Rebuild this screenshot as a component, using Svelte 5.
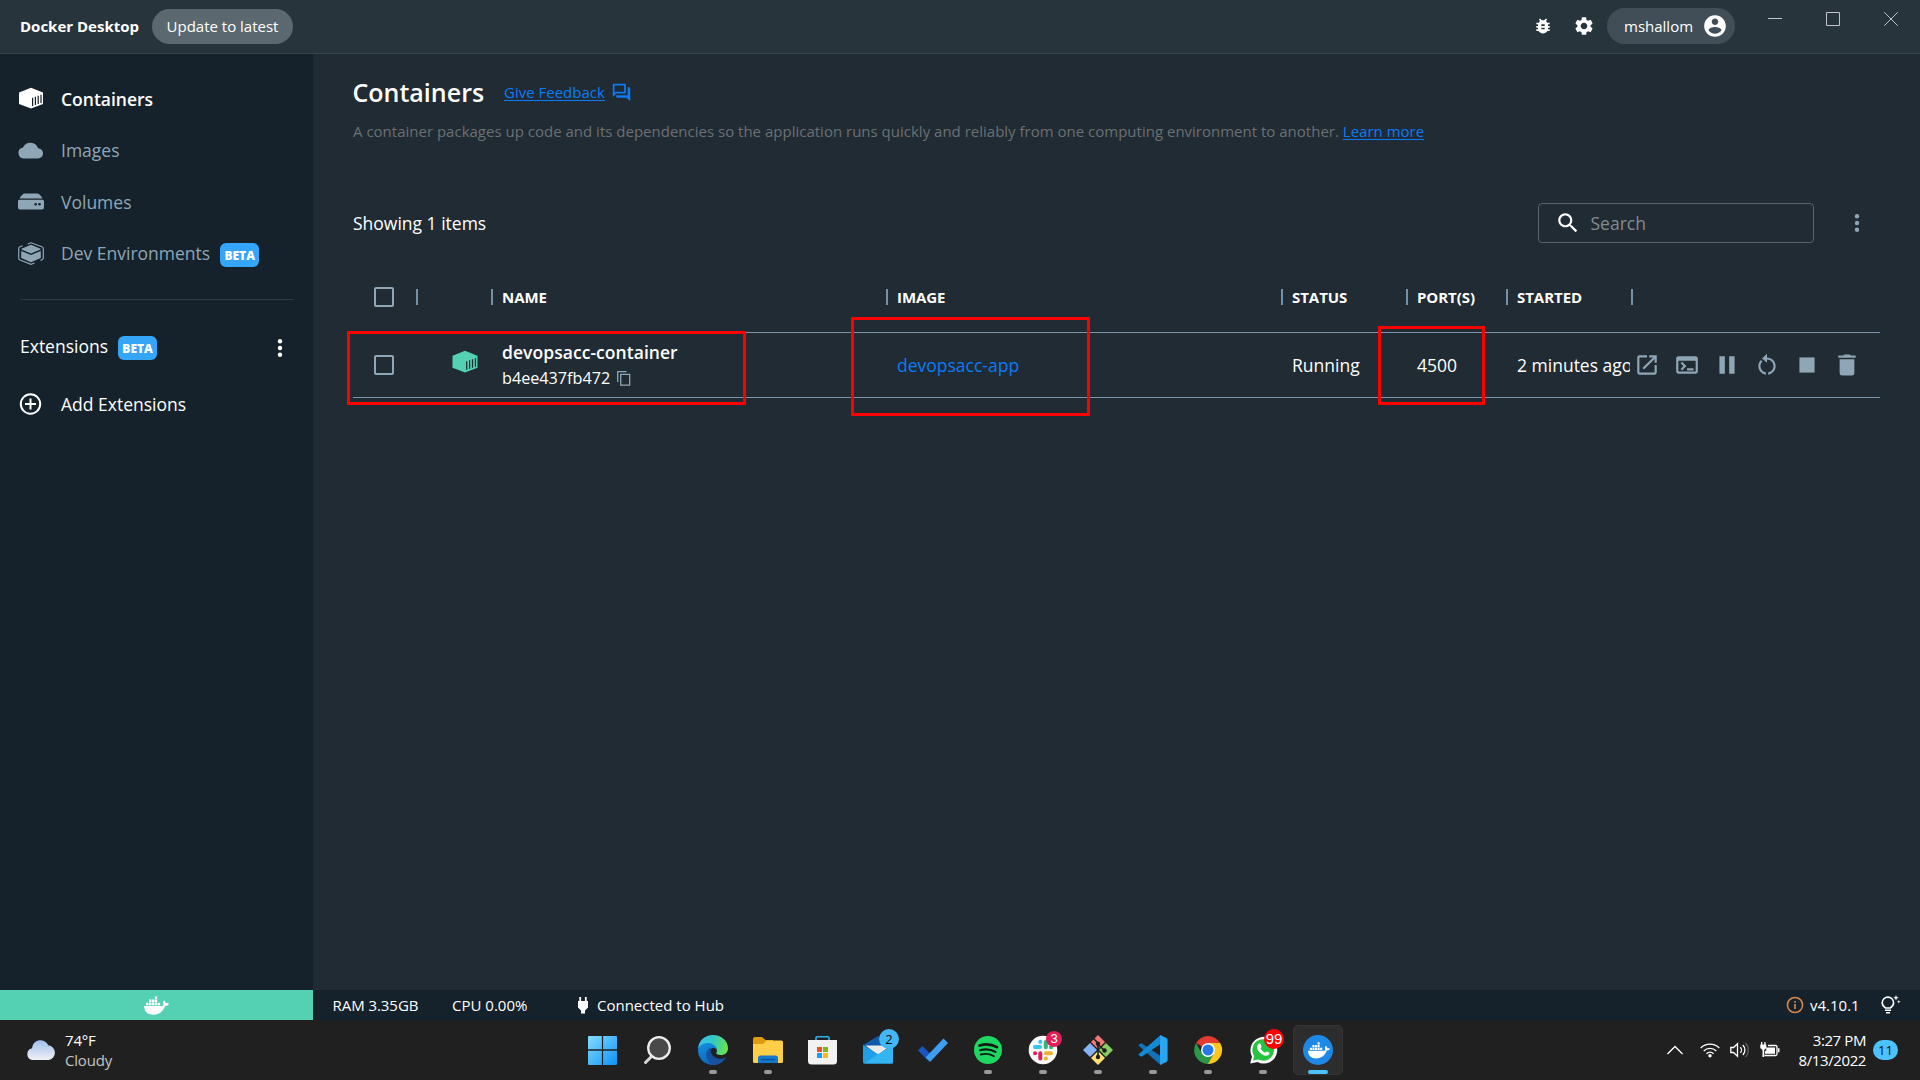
<script>
  const nav = [
    { label: 'Containers', icon: 'container', active: true },
    { label: 'Images', icon: 'cloud' },
    { label: 'Volumes', icon: 'volume' },
    { label: 'Dev Environments', icon: 'dev', beta: true }
  ];
  const columns = ['', '', 'NAME', 'IMAGE', 'STATUS', 'PORT(S)', 'STARTED', ''];
  const actions = ['open', 'terminal', 'pause', 'restart', 'stop', 'delete'];
  const apps = [
    { id: 'start' },
    { id: 'search' },
    { id: 'edge', running: true },
    { id: 'files', running: true },
    { id: 'store' },
    { id: 'mail', badge: '2', tone: 'blue' },
    { id: 'todo' },
    { id: 'spotify', running: true },
    { id: 'slack', running: true, badge: '3', tone: 'pink' },
    { id: 'git', running: true },
    { id: 'vscode', running: true },
    { id: 'chrome', running: true },
    { id: 'whatsapp', running: true, badge: '99', tone: 'red' },
    { id: 'docker', running: true, current: true }
  ];
</script>

{#snippet containerIcon(cut)}
  <path fill="currentColor" d="M13 0.8 25 5.4V17L13 21.6 1 17V5.4Z" />
  <path stroke={cut} stroke-width="1.2" fill="none" d="M14.6 10.8v8.2M17.4 9.8v8.2M20.2 8.8v8.2M23 7.8v8.2" />
{/snippet}

{#snippet whale()}
  <path fill="currentColor" d="M0 9.5H17.6C18.4 9.4 18.9 8.8 18.7 7.8 18.2 6.4 18.4 5.2 19.2 4.2 20.3 4.9 20.9 5.8 21 6.8 22.2 6.5 23.3 6.7 24 7.2 23.4 8.7 22 9.3 20.4 9.2 18.6 14.2 15 17.8 9 17.8 3.4 17.8.4 15 0 9.5Z" />
  <path fill="currentColor" d="M2 6.3h2.3v2.5H2zM4.8 6.3h2.3v2.5H4.8zM7.6 6.3h2.3v2.5H7.6zM10.4 6.3h2.3v2.5h-2.3zM13.2 6.3h2.3v2.5h-2.3zM4.8 3.3h2.3v2.5H4.8zM7.6 3.3h2.3v2.5H7.6zM10.4 3.3h2.3v2.5h-2.3zM10.4.3h2.3v2.5h-2.3z" />
{/snippet}

<div class="desktop">
  <header class="titlebar">
    <strong class="brand">Docker Desktop</strong>
    <button class="update">Update to latest</button>
    <span class="grow"></span>
    <svg class="bug" width="20" height="20" viewBox="0 0 24 24"><path fill="#fff" d="M20 8h-2.81c-.45-.78-1.07-1.45-1.82-1.96L17 4.41 15.59 3l-2.17 2.17C12.96 5.06 12.49 5 12 5s-.96.06-1.41.17L8.41 3 7 4.41l1.62 1.63C7.88 6.55 7.26 7.22 6.81 8H4v2h2.09c-.05.33-.09.66-.09 1v1H4v2h2v1c0 .34.04.67.09 1H4v2h2.81c1.04 1.79 2.97 3 5.19 3s4.15-1.21 5.19-3H20v-2h-2.09c.05-.33.09-.66.09-1v-1h2v-2h-2v-1c0-.34-.04-.67-.09-1H20V8zm-6 8h-4v-2h4v2zm0-4h-4v-2h4v2z" /></svg>
    <svg class="gear" width="22" height="22" viewBox="0 0 24 24"><path fill="#fff" d="M19.14 12.94c.04-.3.06-.61.06-.94 0-.32-.02-.64-.07-.94l2.03-1.58c.18-.14.23-.41.12-.61l-1.92-3.32c-.12-.22-.37-.29-.59-.22l-2.39.96c-.5-.38-1.03-.7-1.62-.94l-.36-2.54c-.04-.24-.24-.41-.48-.41h-3.84c-.24 0-.43.17-.47.41l-.36 2.54c-.59.24-1.13.57-1.62.94l-2.39-.96c-.22-.08-.47 0-.59.22L2.74 8.87c-.12.21-.08.47.12.61l2.03 1.58c-.05.3-.09.63-.09.94s.02.64.07.94l-2.03 1.58c-.18.14-.23.41-.12.61l1.92 3.32c.12.22.37.29.59.22l2.39-.96c.5.38 1.03.7 1.62.94l.36 2.54c.05.24.24.41.48.41h3.84c.24 0 .44-.17.47-.41l.36-2.54c.59-.24 1.13-.56 1.62-.94l2.39.96c.22.08.47 0 .59-.22l1.92-3.32c.12-.22.07-.47-.12-.61l-2.01-1.58zM12 15.6c-1.98 0-3.6-1.62-3.6-3.6s1.62-3.6 3.6-3.6 3.6 1.62 3.6 3.6-1.62 3.6-3.6 3.6z" /></svg>
    <button class="user">
      <span>mshallom</span>
      <svg width="26" height="26" viewBox="0 0 24 24"><path fill="#fff" d="M12 2C6.48 2 2 6.48 2 12s4.48 10 10 10 10-4.48 10-10S17.52 2 12 2zm0 3c1.66 0 3 1.34 3 3s-1.34 3-3 3-3-1.34-3-3 1.34-3 3-3zm0 14.2c-2.5 0-4.71-1.28-6-3.22.03-1.99 4-3.08 6-3.08 1.99 0 5.97 1.09 6 3.08-1.29 1.94-3.5 3.22-6 3.22z" /></svg>
    </button>
    <div class="window-controls">
      <svg width="14" height="14"><path d="M0 6.5h14" /></svg>
      <svg width="14" height="14"><path d="M.5 .5h13v13H.5z" /></svg>
      <svg width="14" height="14"><path d="M.3.3 13.7 13.7M13.7.3.3 13.7" /></svg>
    </div>
  </header>

  <div class="body">
    <aside class="sidebar">
      <nav>
        {#each nav as item}
          <a class="nav-item" class:active={item.active}>
            <svg width="26" height="23" viewBox="0 0 26 23">
              {#if item.icon === 'container'}
                {@render containerIcon('#15222b')}
              {:else if item.icon === 'cloud'}
                <path fill="currentColor" d="M5.5 19.5A5.5 5.5 0 0 1 5 8.6 8 8 0 0 1 20 9.3 5.1 5.1 0 0 1 19.9 19.5Z" />
              {:else if item.icon === 'volume'}
                <path fill="currentColor" d="M7 3.5H19C21 3.5 23 5.5 24.500 8.600H1.500C3 5.500 5 3.500 7 3.500ZM1.500 9.800H24.500C25.400 9.800 26 10.500 26 11.500V17.500C26 18.800 25.200 19.500 24 19.500H2C.8 19.500 0 18.800 0 17.500V11.500C0 10.500.6 9.800 1.500 9.800Z" />
                <circle cx="17.700" cy="14.300" r="1.300" fill="#15222b" /><circle cx="21.500" cy="14.300" r="1.300" fill="#15222b" />
              {:else}
                <path fill="currentColor" d="M13 2.800 22.500 6.800V7.400L13 11.400 3.500 7.400V6.800ZM3.200 9 13 13 22.800 9V16L13 20.200 3.200 16Z" />
                <path fill="none" stroke="currentColor" stroke-width="1.200" d="M9.800 2 13 .8 24 4.800Q25.300 5.300 25.300 6.500V16.500Q25.300 17.500 22.500 18.400M4.500 3.800 2 4.800Q.7 5.300.7 6.500V16.500Q.7 17.500 2 18L13 22.300 16.500 21" />
              {/if}
            </svg>
            <span>{item.label}</span>
            {#if item.beta}<b class="beta">BETA</b>{/if}
          </a>
        {/each}
      </nav>
      <hr />
      <div class="ext-head">
        <span>Extensions</span><b class="beta">BETA</b>
        <svg class="dots" width="6" height="18" viewBox="0 0 6 18"><g fill="#fff"><circle cx="3" cy="2.3" r="2.2" /><circle cx="3" cy="9" r="2.2" /><circle cx="3" cy="15.7" r="2.2" /></g></svg>
      </div>
      <div class="ext-add">
        <svg width="22" height="22" viewBox="0 0 22 22" fill="none" stroke="#fff" stroke-width="2"><circle cx="10.500" cy="11" r="9.7" /><path d="M10.500 5.5v11M5 11h11" /></svg>
        <span>Add Extensions</span>
      </div>
    </aside>

    <main>
      <div class="heading">
        <h1>Containers</h1>
        <a class="link feedback">Give Feedback</a>
        <svg width="21" height="21" viewBox="0 0 24 24"><path fill="#0b7bf7" d="M15 4v7H5.170L4 12.170V4h11m1-2H3c-.55 0-1 .45-1 1v14l4-4h10c.55 0 1-.45 1-1V3c0-.55-.45-1-1-1zm5 4h-2v9H6v2c0 .55.45 1 1 1h11l4 4V7c0-.55-.45-1-1-1z" /></svg>
      </div>
      <p class="intro">A container packages up code and its dependencies so the application runs quickly and reliably from one computing environment to another. <a class="link">Learn more</a></p>

      <div class="toolbar">
        <span class="count">Showing 1 items</span>
        <div class="search">
          <svg width="26" height="26" viewBox="0 0 24 24"><path fill="#fff" d="M15.5 14h-.79l-.28-.27C15.41 12.59 16 11.11 16 9.5 16 5.91 13.09 3 9.5 3S3 5.91 3 9.5 5.91 16 9.5 16c1.61 0 3.09-.59 4.23-1.57l.27.28v.79l5 4.99L20.49 19l-4.99-5zm-6 0C7.01 14 5 11.99 5 9.5S7.01 5 9.5 5 14 7.01 14 9.5 11.99 14 9.5 14z" /></svg>
          <span>Search</span>
        </div>
        <svg class="more" width="6" height="18" viewBox="0 0 6 18"><g fill="#8fa6b6"><circle cx="3" cy="2.3" r="2.2" /><circle cx="3" cy="9" r="2.2" /><circle cx="3" cy="15.7" r="2.2" /></g></svg>
      </div>

      <div class="table">
        <div class="row head">
          {#each columns as column, i}
            <div class="cell" class:first={i === 0}>
              {#if i === 0}<i class="checkbox"></i>{:else}<i class="sep"></i>{column}{/if}
            </div>
          {/each}
        </div>
        <div class="row item">
          <div class="cell first"><i class="checkbox"></i></div>
          <div class="cell type"><svg width="28" height="24" viewBox="0 0 26 23">{@render containerIcon('#202b33')}</svg></div>
          <div class="cell name">
            <strong>devopsacc-container</strong>
            <span class="hash">b4ee437fb472
              <svg width="14" height="15" viewBox="0 0 14 15" fill="none" stroke="#8fa6b6" stroke-width="1.3"><path d="M.7 11V.7H9.5M3.7 3.4h9v10.8h-9z" /></svg>
            </span>
          </div>
          <div class="cell text image">devopsacc-app</div>
          <div class="cell text">Running</div>
          <div class="cell text">4500</div>
          <div class="cell text started"><span>2 minutes ago</span></div>
          <div class="actions">
            {#each actions as action}
              <svg width="26" height="26" viewBox="0 0 24 24" fill="#8fa6b6">
                {#if action === 'open'}
                  <path d="M19 19H5V5h7V3H5c-1.110 0-2 .9-2 2v14c0 1.100.89 2 2 2h14c1.100 0 2-.9 2-2v-7h-2v7zM14 3v2h3.590l-9.830 9.830 1.410 1.410L19 6.410V10h2V3h-7z" />
                {:else if action === 'terminal'}
                  <path d="M20 4H4c-1.110 0-2 .9-2 2v12c0 1.100.89 2 2 2h16c1.100 0 2-.9 2-2V6c0-1.100-.89-2-2-2zm0 14H4V8h16v10zm-2-1h-6v-2h6v2zM7.500 17l-1.410-1.410L8.670 13l-2.590-2.590L7.500 9l4 4-4 4z" />
                {:else if action === 'pause'}
                  <path d="M5 4h5v16H5zM14 4h5v16h-5z" />
                {:else if action === 'restart'}
                  <path d="M12 5V1.500L7.400 6 12 10V7c3.310 0 6 2.690 6 6 0 2.970-2.170 5.430-5 5.910v2.020c3.950-.49 7-3.850 7-7.930 0-4.420-3.580-8-8-8zM6 13c0-1.650.67-3.150 1.760-4.240L6.340 7.340C4.900 8.790 4 10.790 4 13c0 4.080 3.050 7.440 7 7.930v-2.020c-2.830-.48-5-2.940-5-5.910z" />
                {:else if action === 'stop'}
                  <path d="M5 5h14v14H5z" />
                {:else}
                  <path d="M5.200 6.800H18.800V19.500Q18.800 21.800 16.500 21.800H7.500Q5.200 21.800 5.200 19.500ZM4 3.200H8.500L9.500 2.200H14.500L15.500 3.200H20V5.300H4Z" />
                {/if}
              </svg>
            {/each}
          </div>
        </div>
        <i class="mark mark-name"></i>
        <i class="mark mark-image"></i>
        <i class="mark mark-port"></i>
      </div>
    </main>
  </div>

  <footer class="status">
    <div class="engine"><svg width="25" height="19" viewBox="0 0 24 18">{@render whale()}</svg></div>
    <span class="ram">RAM 3.35GB</span>
    <span class="cpu">CPU 0.00%</span>
    <svg class="plug" width="12" height="17" viewBox="0 0 12 17"><path fill="#fff" d="M2.300 0H4.100V4H7.900V0H9.700V4H11V10.500L8 13.500V16.500H4V13.500L1 10.500V4H2.300Z" /></svg>
    <span class="hub">Connected to Hub</span>
    <span class="grow"></span>
    <svg class="info" width="18" height="18" viewBox="0 0 18 18"><circle cx="9" cy="9" r="7.600" fill="none" stroke="#d98a4b" stroke-width="1.500" /><path stroke="#d98a4b" stroke-width="1.600" d="M9 8v5M9 5v1.700" /></svg>
    <span class="version">v4.10.1</span>
    <svg class="bulb" width="20" height="20" viewBox="0 0 20 20"><path fill="none" stroke="#fff" stroke-width="1.600" d="M4.500 13C2.500 11.700 1.200 10 1.200 7.800A5.700 5.700 0 0 1 12.600 7.800C12.600 10 11.300 11.700 9.300 13Z" /><path fill="#fff" d="M4 14.400h6v1.500H4zM5 17h4v1.600H5zM15 0l.8 2 2 .8-2 .8-.8 2-.8-2-2-.8 2-.8zM17.800 5l.5 1.300 1.300.5-1.300.5-.5 1.300-.5-1.300-1.300-.5 1.300-.5z" /></svg>
  </footer>

  <div class="taskbar">
    <div class="weather">
      <svg width="30" height="22" viewBox="0 0 30 22">
        <defs><linearGradient id="cloud" x1="0" y1="0" x2="0" y2="1"><stop offset="0" stop-color="#9fc0ee" /><stop offset=".55" stop-color="#cddaf0" /><stop offset="1" stop-color="#eef1f7" /></linearGradient></defs>
        <path fill="url(#cloud)" d="M6 21A6 6 0 0 1 6 9.300 8.500 8.500 0 0 1 22.300 6.300 7.400 7.400 0 0 1 22.500 21Z" />
      </svg>
      <div><span>74°F</span><span class="dim">Cloudy</span></div>
    </div>

    <div class="apps">
      {#each apps as app}
        <div class="app" class:current={app.current}>
          <svg width="30" height="30" viewBox="0 0 30 30">
            {#if app.id === 'start'}
              <defs><linearGradient id="win" x1="0" y1="0" x2="1" y2="1"><stop offset="0" stop-color="#86dcff" /><stop offset="1" stop-color="#0a93f5" /></linearGradient></defs>
              <path fill="url(#win)" d="M1 1H13.900V14.300H0V2A1 1 0 0 1 1 1ZM15.100 1H28A1 1 0 0 1 29 2V14.300H15.100ZM0 15.700H13.900V30H1A1 1 0 0 1 0 29ZM15.100 15.700H29V29A1 1 0 0 1 28 30H15.100Z" />
            {:else if app.id === 'search'}
              <path stroke="#d8d8d8" stroke-width="3" stroke-linecap="round" d="M9 21 2.500 27.500" />
              <circle cx="16" cy="13" r="10.800" fill="#494949" stroke="#eee" stroke-width="2.300" />
            {:else if app.id === 'edge'}
              <defs>
                <linearGradient id="edgeA" x1="0" y1=".3" x2="1" y2=".5"><stop offset="0" stop-color="#35c1f1" /><stop offset=".5" stop-color="#35c9c0" /><stop offset="1" stop-color="#6be34a" /></linearGradient>
                <linearGradient id="edgeB" x1="0" y1="0" x2=".4" y2="1"><stop offset="0" stop-color="#1391df" /><stop offset="1" stop-color="#0f63bd" /></linearGradient>
              </defs>
              <path fill="url(#edgeA)" d="M0 14C.5 5.500 7 0 15 0 23.500 0 30 6 30 13 30 17.500 27 20 23 20 20 20 17.500 19 18.500 17.500 20 15.500 18 10.500 13 9.500 8 8.500 2 10 0 14Z" />
              <path fill="url(#edgeB)" d="M0 15C.5 9.500 7 7.500 11 8 15.500 8.500 18.500 12 18.700 15 16 11.500 12 13 12 18 12 24 18 27.500 25.500 25.500 23 28.500 19 30 15 30 6.500 30 0 23.500 0 15Z" />
              <path fill="#17509c" d="M11.500 13C9 15.500 7.500 18 8.500 22 9.700 26.500 13 29.500 17 29.800 22 29 26 26.500 28 22.500 24 24.500 19 24.300 16 21.500 12.500 18.500 12 15.500 13.500 13Z" />
            {:else if app.id === 'files'}
              <path fill="#e09a10" d="M0 4A2 2 0 0 1 2 2H9L12.500 5H20V12H0Z" />
              <path fill="#ffcf48" d="M0 9H10L13.500 5.500H28.500A1.500 1.500 0 0 1 30 7V26.500A1.500 1.500 0 0 1 28.500 28H1.500A1.500 1.500 0 0 1 0 26.500Z" />
              <path fill="#1478cf" d="M5 28V23A2.500 2.500 0 0 1 7.500 20.500H22.500A2.500 2.500 0 0 1 25 23V28Z" /><path fill="#0a4f91" d="M8.500 24h13v1.200h-13z" />
            {:else if app.id === 'store'}
              <path fill="none" stroke="#2fb1ee" stroke-width="1.600" d="M8 6V2.800C8 2.200 8.400 1.800 9 1.800H20C20.600 1.800 21 2.200 21 2.800V6" />
              <path fill="#f2f2f2" d="M0 5H29V26A3.500 3.500 0 0 1 25.500 29.500H3.500A3.500 3.500 0 0 1 0 26Z" />
              <path fill="#e8502c" d="M9 12h5v5h-5z" /><path fill="#7cb80e" d="M15 12h5v5h-5z" /><path fill="#14a0ea" d="M9 18h5v5h-5z" /><path fill="#fcb813" d="M15 18h5v5h-5z" />
            {:else if app.id === 'mail'}
              <path fill="#1058a8" d="M0 10 15 1 30 10V20H0Z" /><path fill="#eaeaea" d="M2.500 10.500H27.500L15 20Z" />
              <path fill="#1f9fe6" d="M0 10 30 28.500H1.500A1.500 1.500 0 0 1 0 27Z" /><path fill="#33b5f2" d="M30 10 15 19.300 1 28.500H28.500A1.500 1.500 0 0 0 30 27Z" />
            {:else if app.id === 'todo'}
              <path fill="#1b55c2" d="M0 15.500 4.500 11 13.500 20 9 24.500Z" /><path fill="#3d9df0" d="M7.500 22.500 25.500 3.500 30 8 12 27Z" />
            {:else if app.id === 'spotify'}
              <circle cx="15" cy="15" r="14" fill="#1ed760" />
              <path fill="none" stroke="#111a14" stroke-linecap="round" stroke-width="2.600" d="M6.500 10.500C12 8.800 19 9.300 24 12.100" /><path fill="none" stroke="#111a14" stroke-linecap="round" stroke-width="2.200" d="M7.200 15.200C12 13.800 18 14.400 22.500 16.900" /><path fill="none" stroke="#111a14" stroke-linecap="round" stroke-width="1.800" d="M7.800 19.500C12 18.500 17 18.900 21 21.200" />
            {:else if app.id === 'slack'}
              <circle cx="15" cy="15" r="14.300" fill="#fafafa" />
              <g stroke-width="4" stroke-linecap="round" fill="none"><path stroke="#36c5f0" d="M12.300 6.800v.1M7 12h5" /><path stroke="#2eb67d" d="M17.800 7v5.200M23 12.200h.1" /><path stroke="#e01e5a" d="M12.300 18.300v5.200M7 18.300h.1" /><path stroke="#ecb22e" d="M18 18.300h5M17.800 23.500h.1" /></g>
            {:else if app.id === 'git'}
              <path fill="#f57676" d="M15 0 22 7 15 14 8 7Z" /><path fill="#85b2f8" d="M7 8 14 15 7 22 0 15Z" /><path fill="#88cc62" d="M23 8 30 15 23 22 16 15Z" /><path fill="#ffdf76" d="M15 16 22 23 15 30 8 23Z" />
              <path fill="none" stroke="#1d1d1d" stroke-width="1.600" d="M10 3 15 8V22M15 9.500 21.500 15.500" /><g fill="#1d1d1d"><circle cx="15" cy="8.700" r="2.200" /><circle cx="15" cy="22" r="2.200" /><circle cx="21.500" cy="15.500" r="2.200" /></g>
            {:else if app.id === 'vscode'}
              <path fill="#1272b8" d="M.3 10.500 2.500 8.500 4 8.400 24 22V29.500L21.500 29Z" /><path fill="#1489d6" d="M.3 19.500 2.500 21.500 4 21.600 24 8V.5L21.500 1Z" /><path fill="#27a5f2" d="M22 0 28.500 3A2 2 0 0 1 29.600 4.800V25.200A2 2 0 0 1 28.500 27L22 30Z" />
            {:else if app.id === 'chrome'}
              <path fill="#e53b2e" d="M15 15 3 8A14 14 0 0 1 27.200 8Z" /><path fill="#fcc61e" d="M15 15 15 8H27.200A14 14 0 0 1 15 29Z" /><path fill="#2b9847" d="M15 15 9 18.500 3 8A14 14 0 0 0 15 29L21 18.500Z" /><circle cx="15" cy="15" r="7" fill="#fff" /><circle cx="15" cy="15" r="5.500" fill="#2678e8" />
            {:else if app.id === 'whatsapp'}
              <path fill="#fff" d="M2.200 28.500 4 21.500A13.400 13.400 0 1 1 9.500 27Z" /><path fill="#25c33f" d="M5 25.500 6.200 21A10.800 10.800 0 1 1 10.300 24.600Z" />
              <path fill="#fff" d="M10.500 9C11.500 8.300 12.500 8.500 12.800 9.500L13.600 11.600C13.500 12.500 12.800 13 12.500 13.300 13.500 15.500 15 16.800 17.300 17.700 17.800 17.300 18.300 16.500 19 16.500L21.500 17.800C21.800 19.500 20 21 18 20.800 13.500 20.200 9.500 16 9 12.500 9 11 9.500 9.700 10.500 9Z" />
            {:else}
              <circle cx="15" cy="15" r="15" fill="#1d88e5" />
              <g class="white" transform="translate(5 7) scale(.92)">{@render whale()}</g>
            {/if}
          </svg>
          {#if app.running}<i class="pill"></i>{/if}
          {#if app.badge}<b class="badge {app.tone}">{app.badge}</b>{/if}
        </div>
      {/each}
    </div>

    <div class="tray">
      <svg class="chev" width="16" height="10" viewBox="0 0 16 10"><path d="M.5 9 8 1.500 15.500 9" /></svg>
      <svg class="wifi" width="20" height="16" viewBox="0 0 20 16"><path d="M.7 6A13.200 13.200 0 0 1 19.300 6M3.700 9A9 9 0 0 1 16.300 9M6.500 11.700A5 5 0 0 1 13.500 11.700" /><circle cx="10" cy="13.800" r="1.700" fill="#fff" stroke="none" /></svg>
      <svg class="sound" width="20" height="16" viewBox="0 0 20 16"><path d="M.8 5.500H3.500L7.500 1.700V14.300L3.500 10.500H.8ZM10.300 5.200A4 4 0 0 1 10.300 10.800M12.800 3A7 7 0 0 1 12.800 13" /><path opacity=".3" d="M15.500 1A10 10 0 0 1 15.500 15" /></svg>
      <svg class="battery" width="20" height="16" viewBox="0 0 20 16"><path d="M8 3.500H15.500A1.500 1.500 0 0 1 17 5V12A1.500 1.500 0 0 1 15.500 13.500H4.500" /><path fill="#fff" stroke="none" d="M6 5.500H15V11.800H5V9.500L6.500 8ZM18 6.200h1.500v4H18zM.3 2.500H1V0h1.300v2.500h2V0h1.300v2.500h.7V6L4.200 8V15H2.500V8L.3 6Z" /></svg>
      <div class="clock"><span>3:27 PM</span><span>8/13/2022</span></div>
      <b class="notices">11</b>
    </div>
  </div>
</div>

<style>
  :global(body) { margin: 0; background: #202b33; }
  * { box-sizing: border-box; }
  svg { display: block; flex: none; overflow: visible; }
  button { border: 0; padding: 0; font: inherit; color: inherit; }
  .grow { flex: 1; }
  .desktop { width: 1920px; height: 1080px; display: flex; flex-direction: column; overflow: hidden; color: #fff; font: 17.5px/24px "Open Sans", "Noto Sans", sans-serif; white-space: nowrap; }

  .titlebar { height: 54px; flex: none; display: flex; align-items: center; background: #28343c; border-bottom: 1px solid #34424c; padding: 0 0 1px 20px; font-size: 15px; }
  .brand { width: 132px; font-weight: 700; padding-bottom: 1px; }
  .update { width: 141px; height: 35px; border-radius: 18px; background: #5c686f; padding-bottom: 1px; }
  .bug { margin-right: 20px; }
  .gear { margin-right: 12px; }
  .user { width: 128px; height: 36px; border-radius: 18px; background: #414e58; display: flex; align-items: center; justify-content: space-between; padding: 0 7px 1px 17px; }
  .window-controls { display: flex; gap: 44px; margin: 0 22px 14px 33px; fill: none; stroke: #bfc4c8; }

  .body { flex: 1; min-height: 0; display: flex; }
  .sidebar { width: 313px; background: #15222b; padding: 19px 20px 0; }
  .nav-item { height: 51.5px; display: flex; align-items: center; color: #8fa6b6; }
  .nav-item svg { margin-left: -2px; margin-right: 17px; }
  .nav-item.active { color: #fff; font-weight: 600; }
  .beta { width: 39px; height: 24px; border-radius: 6px; margin: 3px 0 0 10px; background: #35a5f7; color: #fff; font: 800 12px/25px "Open Sans", sans-serif; text-align: center; }
  hr { height: 1px; border: 0; background: #2d3b45; margin: 20px 0 34px; }
  .ext-head { height: 24px; display: flex; align-items: center; }
  .dots { margin: 3px 10px 0 auto; }
  .ext-add { height: 24px; margin-top: 34px; display: flex; align-items: center; gap: 19px; }

  main { flex: 1; background: #202b33; padding: 20px 40px 0; }
  .heading { height: 36px; display: flex; align-items: center; }
  h1 { margin: 0 0 0 -0.5px; width: 151.5px; font: 600 25px/36px "Open Sans", sans-serif; }
  .link { color: #0b7bf7; text-decoration: underline; text-decoration-thickness: 1px; text-underline-offset: 2px; }
  .feedback { font-size: 15px; margin-right: 6px; }
  .intro { margin: 9px 0 0; font-size: 15px; line-height: 24px; color: #6b7073; letter-spacing: 0.003px; }
  .toolbar { margin-top: 60px; height: 40px; display: flex; align-items: center; }
  .search { width: 276px; height: 40px; margin-left: auto; border: 1px solid #56636c; border-radius: 4px; display: flex; align-items: center; padding-left: 16px; gap: 9.5px; color: #848b90; }
  .more { margin: 0 20px 0 40px; }

  .table { position: relative; margin-top: 19px; width: 1527px; }
  .row { display: grid; grid-template-columns: 64px 75px 395px 395px 125px 100px 125px 248px; align-items: center; }
  .head { height: 70px; font-size: 15px; font-weight: 700; letter-spacing: -0.05px; }
  .item { height: 66px; border-top: 1px solid #7b95ad; border-bottom: 1px solid #7b95ad; }
  .cell { display: flex; align-items: center; padding-left: 10px; min-width: 0; }
  .cell.text { padding-bottom: 1px; }
  .head .cell { padding-left: 0; margin-left: -1px; }
  .head .cell.first { padding-left: 22px; }
  .cell.first { padding-left: 21px; }
  .checkbox { width: 20px; height: 20px; border: 2px solid #8fa6b6; border-radius: 2px; }
  .sep { width: 2px; height: 16px; margin-right: 9px; background: #7491aa; }
  .type { padding: 0 0 7px 34px; color: #54d1b2; }
  .name { flex-direction: column; align-items: flex-start; }
  .name strong { font-weight: 600; line-height: 26px; letter-spacing: 0.05px; }
  .hash { display: flex; align-items: center; gap: 7px; font-size: 16.200px; line-height: 26px; }
  .image { color: #0b7bf7; }
  .started span { width: 113px; overflow: hidden; }
  .actions { display: flex; gap: 14px; padding: 0 0 1px 2px; }
  .mark { position: absolute; border: 3px solid #f00; }
  .mark-name { left: -6px; top: 69px; width: 399px; height: 74px; }
  .mark-image { left: 498px; top: 55px; width: 239px; height: 99px; }
  .mark-port { left: 1025px; top: 64px; width: 107px; height: 79px; }

  .status { height: 30px; flex: none; display: flex; align-items: center; background: #15222b; font-size: 15px; }
  .engine { width: 313px; height: 30px; background: #54d1b2; display: grid; place-items: center; margin-right: 19.5px; }
  .ram { width: 119.5px; letter-spacing: -0.05px; }
  .cpu { width: 125px; letter-spacing: 0; }
  .plug { margin-right: 8px; }
  .info { margin-right: 6px; }
  .version { width: 71px; }
  .bulb { margin-right: 19px; }

  .taskbar { height: 60px; flex: none; display: grid; grid-template-columns: 575px 1fr 303px; align-items: center; background: #202020; font-size: 15px; line-height: 20px; }
  .weather { display: flex; align-items: center; gap: 9px; padding-left: 26px; letter-spacing: -0.2px; }
  .weather div, .clock { display: flex; flex-direction: column; padding-bottom: 1px; }
  .dim { color: #c4c4c4; }
  .apps { display: flex; gap: 5px; padding-left: 3px; }
  .app { position: relative; width: 50px; height: 50px; border-radius: 5px; display: grid; place-items: center; }
  .current { background: #2d2d2d; border: 1px solid #353535; }
  .white { color: #fff; }
  .pill { position: absolute; bottom: 1px; left: 21px; width: 8px; height: 4px; border-radius: 2px; background: #9a9a9a; }
  .current .pill { bottom: 0; left: 14px; width: 20px; background: #4cc2ff; }
  .badge { position: absolute; top: 4px; right: 4px; width: 20px; height: 20px; border-radius: 50%; font: 400 13px/20px "Liberation Sans", sans-serif; text-align: center; }
  .blue { background: #43b6f5; color: #111; font-family: "Open Sans", sans-serif; }
  .pink { top: 6px; right: 6px; width: 16px; height: 16px; line-height: 16px; background: #e01e5a; }
  .red { background: #f00; font-size: 15px; }
  .tray { display: flex; align-items: center; padding-left: 50px; fill: none; stroke: #fff; stroke-width: 1.3; }
  .tray svg { fill: none; }
  .chev { margin-right: 17px; }
  .wifi, .sound { margin-right: 10px; }
  .clock { width: 86px; text-align: right; letter-spacing: -0.4px; }
  .notices { width: 25px; height: 20px; margin-left: 7px; border-radius: 10px; background: #4cc2ff; color: #111; font: 400 13px/20px "Open Sans", sans-serif; text-align: center; }
</style>
